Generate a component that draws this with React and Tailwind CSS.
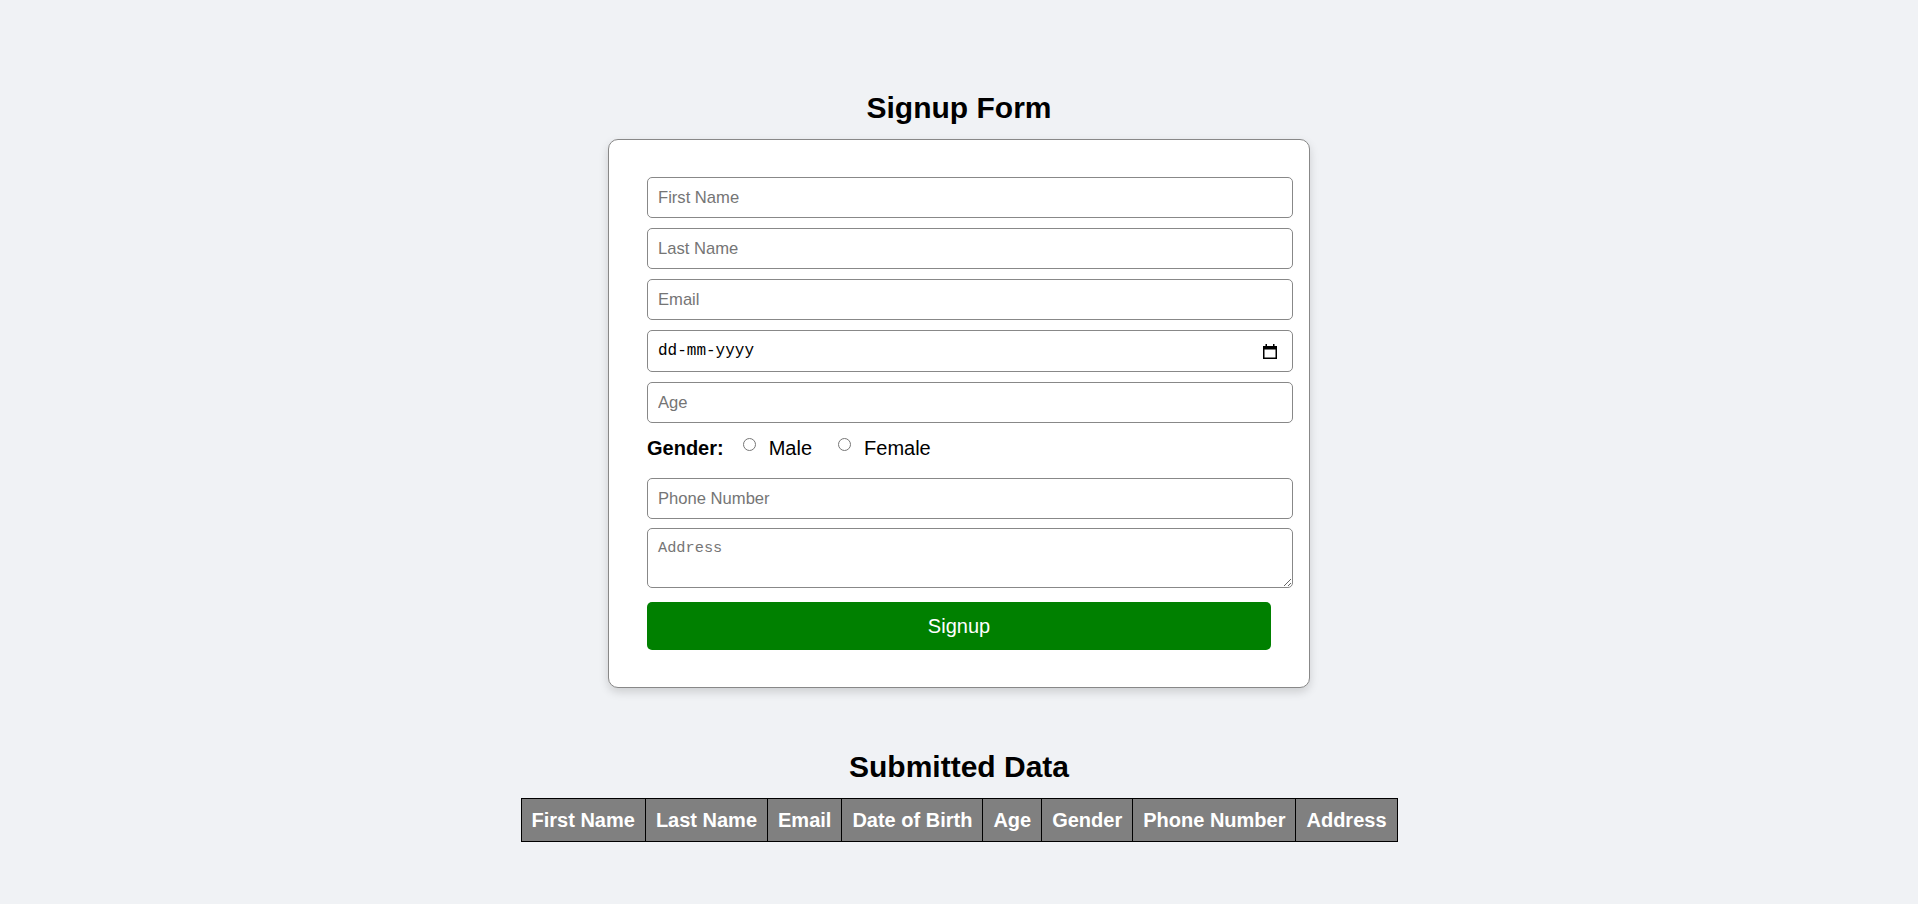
import React, { useState } from "react";

const inputCls =
  "block w-[646px] h-[41px] px-[10px] border border-[#888888] rounded-[5px] bg-white text-[16.6px] text-black placeholder:text-[#757575] outline-none";

const columns = [
  "First Name",
  "Last Name",
  "Email",
  "Date of Birth",
  "Age",
  "Gender",
  "Phone Number",
  "Address",
];

const CalendarIcon = () => (
  <svg width="16" height="15" viewBox="0 0 16 15" fill="none">
    <rect x="1.75" y="2.75" width="12.5" height="11.5" stroke="#000" strokeWidth="1.5" />
    <rect x="1" y="2" width="14" height="3.5" fill="#000" />
    <rect x="3.5" y="0" width="1.5" height="3" fill="#000" />
    <rect x="11" y="0" width="1.5" height="3" fill="#000" />
  </svg>
);

const App = () => {
  const [gender, setGender] = useState("");

  return (
    <div className="min-h-screen bg-[#f0f2f5] flex flex-col items-center pt-[91px] font-['Liberation_Sans',Arial,sans-serif] text-black">
      <h2 className="text-[30px] font-bold leading-[34px]">Signup Form</h2>

      <form
        className="mt-[14px] w-[702px] bg-white border border-[#888888] rounded-[10px] px-[38px] pt-[37px] pb-[37px] shadow-[0_4px_10px_rgba(0,0,0,0.15)]"
        onSubmit={(e) => e.preventDefault()}
      >
        <input className={inputCls + " mb-[10px]"} placeholder="First Name" />
        <input className={inputCls + " mb-[10px]"} placeholder="Last Name" />
        <input className={inputCls + " mb-[10px]"} placeholder="Email" />
        <div className="w-[646px] h-[42px] mb-[10px] flex items-center justify-between pl-[10px] pr-[14px] border border-[#888888] rounded-[5px] bg-white">
          <span className="font-['Liberation_Mono',monospace] text-[16px]">dd-mm-yyyy</span>
          <CalendarIcon />
        </div>
        <input className={inputCls + " mb-[10px]"} placeholder="Age" />

        <div className="h-[45px] pt-[4px] flex items-start text-[20px] leading-[23px]">
          <span className="font-bold">Gender:</span>
          <input
            type="radio"
            name="gender"
            checked={gender === "male"}
            onChange={() => setGender("male")}
            className="ml-[19px] mt-[1px] w-[13px] h-[13px]"
          />
          <span className="ml-[13px]">Male</span>
          <input
            type="radio"
            name="gender"
            checked={gender === "female"}
            onChange={() => setGender("female")}
            className="ml-[26px] mt-[1px] w-[13px] h-[13px]"
          />
          <span className="ml-[13px]">Female</span>
        </div>

        <input className={inputCls + " mb-[9px]"} placeholder="Phone Number" />
        <textarea
          className="block w-[646px] h-[60px] px-[10px] py-[10px] border border-[#888888] rounded-[5px] bg-white font-['Liberation_Mono',monospace] text-[15.3px] leading-[18px] placeholder:text-[#757575] outline-none"
          placeholder="Address"
        />

        <button
          type="submit"
          className="mt-[14px] w-[624px] h-[48px] bg-[#008000] rounded-[5px] text-white text-[20px] leading-[23px]"
        >
          Signup
        </button>
      </form>

      <h2 className="mt-[62px] text-[30px] font-bold leading-[34px]">Submitted Data</h2>
      <table className="mt-[14px] border-collapse border border-black">
        <thead>
          <tr>
            {columns.map((c) => (
              <th
                key={c}
                className="border border-black bg-[#808080] text-white font-bold text-[20px] leading-[23px] px-[10px] py-[9.5px] whitespace-nowrap"
              >
                {c}
              </th>
            ))}
          </tr>
        </thead>
        <tbody></tbody>
      </table>
    </div>
  );
};

export default App;
